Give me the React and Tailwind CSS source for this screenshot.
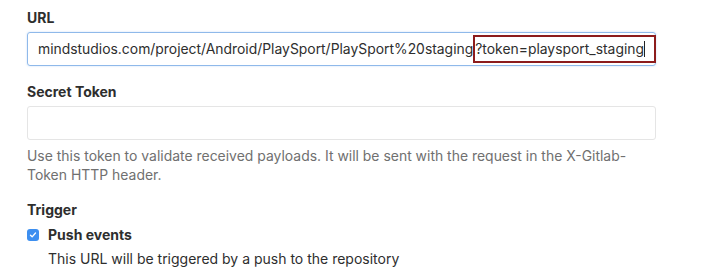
export default function App() {
  return (
    <div className="w-[709px] h-[273px] bg-white pl-[27px] pr-[53px] pt-[8px] font-['Inter',sans-serif] text-[14px] text-[#2e2e2e] overflow-hidden">
      <div className="font-bold leading-[20px]">URL</div>
      <div className="mt-[4px] h-[34px] flex items-center rounded-[3px] border border-[#8fb9ea] shadow-[0_0_2px_rgba(80,150,230,0.35)] pl-[10px] text-[13.9px] whitespace-nowrap">
        <span>mindstudios.com/project/Android/PlaySport/PlaySport%20staging</span>
        <span className="h-[28px] flex items-center border-2 border-[#8d1c1c] pr-[9px]">
          ?token=playsport_staging
          <span className="inline-block w-px h-[16px] bg-[#222]" />
        </span>
      </div>

      <div className="mt-[16px] font-bold leading-[20px]">Secret Token</div>
      <div className="mt-[4px] h-[34px] rounded-[3px] border border-[#e5e5e5]" />
      <p className="mt-[6px] leading-[19px] text-[13.95px] text-[#707070]">
        Use this token to validate received payloads. It will be sent with the request in the X-Gitlab-
        <br />
        Token HTTP header.
      </p>

      <div className="mt-[16px] font-bold leading-[20px]">Trigger</div>
      <label className="mt-[5px] flex items-center gap-[9px] leading-[20px]">
        <span className="w-[12px] h-[12px] rounded-[3px] bg-[#3d8ff0] flex items-center justify-center">
          <svg viewBox="0 0 12 12" className="w-[10px] h-[10px]">
            <path d="M3 6.2 L5 8.2 L9 3.6" fill="none" stroke="white" strokeWidth="1.6" strokeLinecap="round" strokeLinejoin="round" />
          </svg>
        </span>
        <span className="font-bold">Push events</span>
      </label>
      <p className="mt-[4px] pl-[21px] leading-[19px]">This URL will be triggered by a push to the repository</p>
    </div>
  );
}
